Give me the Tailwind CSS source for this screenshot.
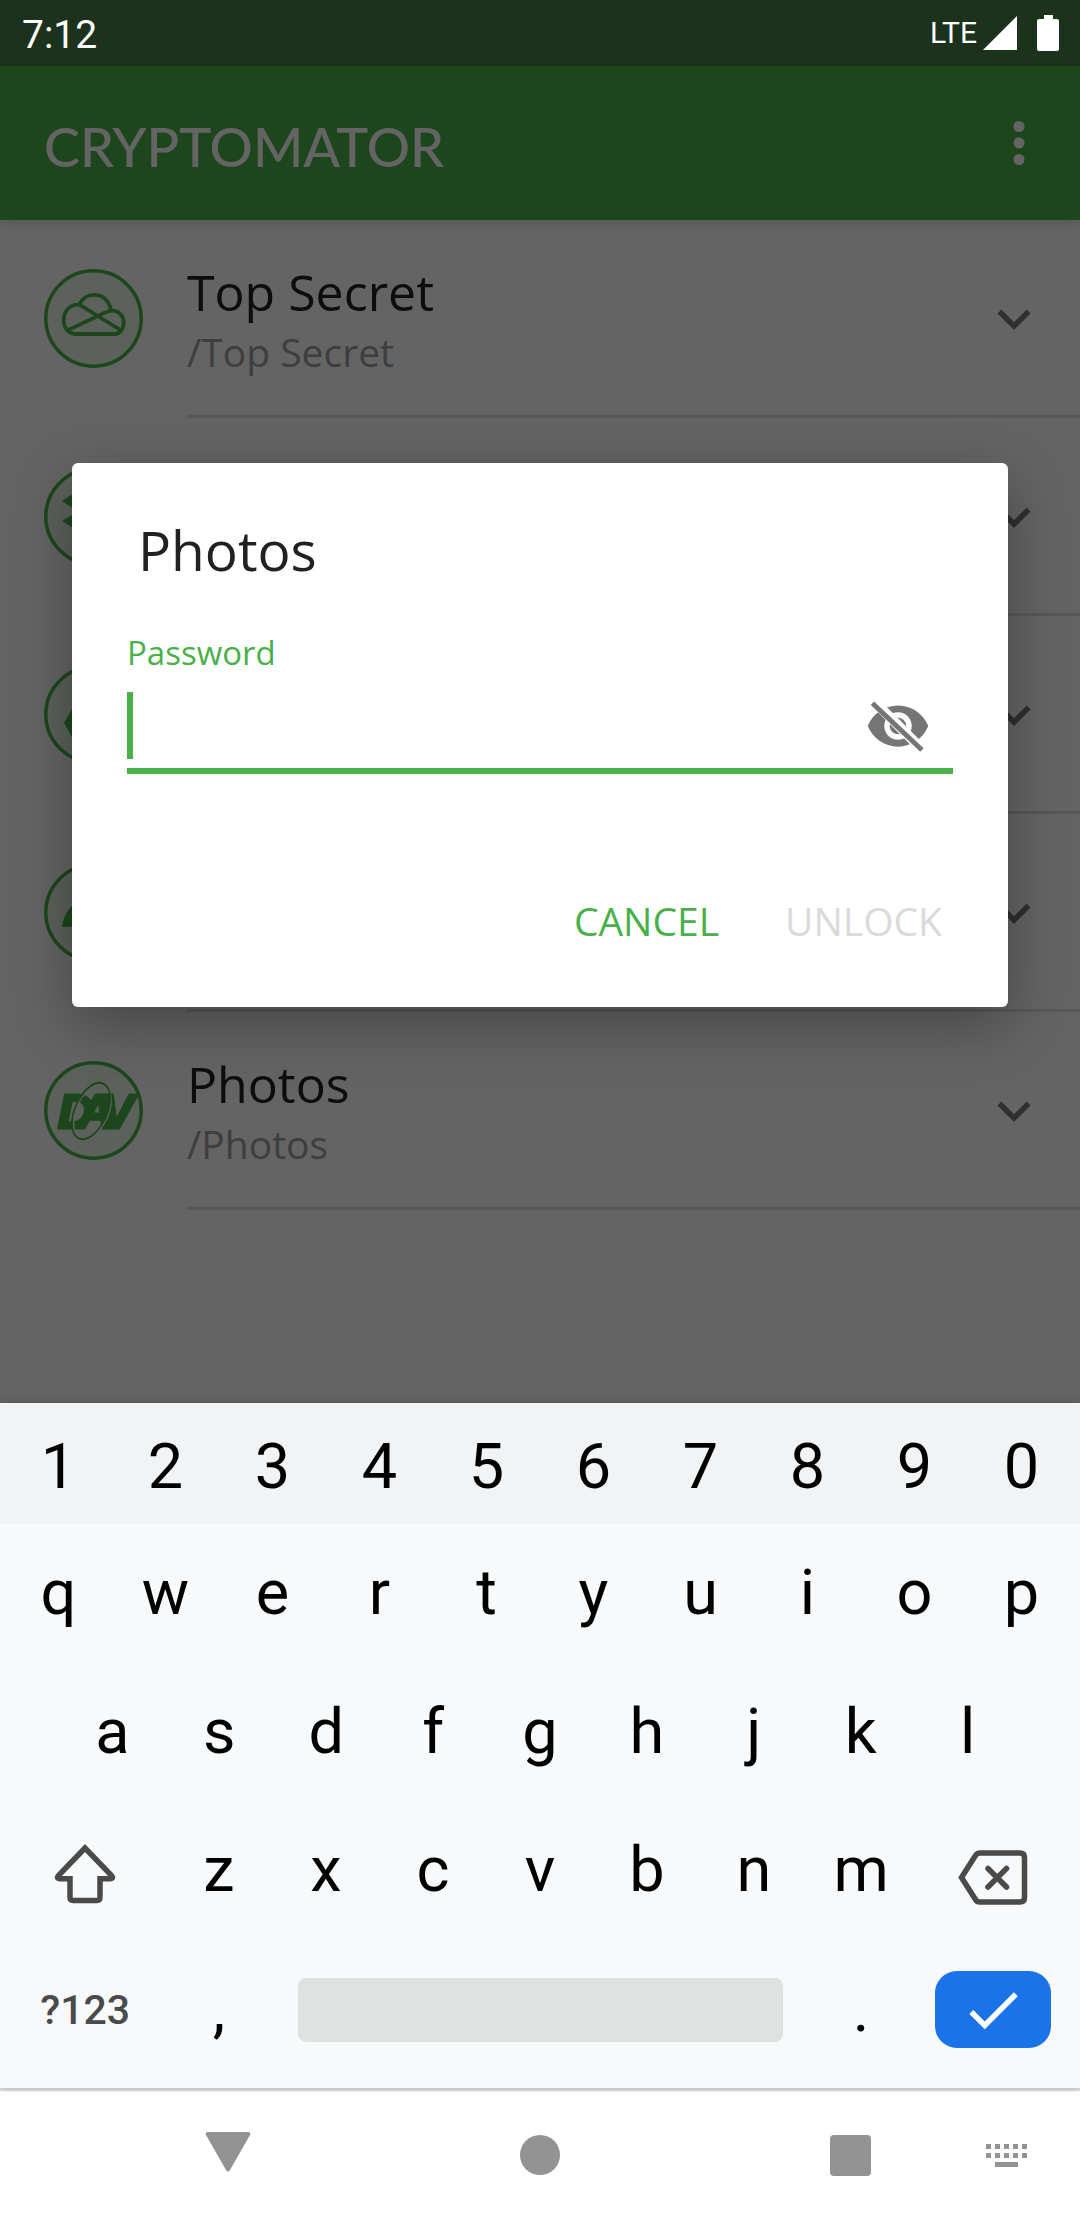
<!DOCTYPE html>
<html lang="en">
<head>
<meta charset="utf-8">
<meta name="viewport" content="width=device-width, initial-scale=1">
<title>Cryptomator</title>
<script src="https://cdn.jsdelivr.net/npm/@tailwindcss/browser@4"></script>
</head>
<body class="flex min-h-screen flex-col bg-white font-['Open_Sans','Noto_Sans',sans-serif]">

<div class="relative flex flex-1 flex-col bg-[#fafafa]">

  <!-- Status bar -->
  <div class="relative z-20 flex h-[66px] items-center bg-[#1c321c] pr-[21px] pl-[22px] font-['Roboto',sans-serif] text-white">
    <span class="flex-1 pt-1 text-[39px] leading-[46px]">7:12</span>
    <span class="font-['Liberation_Sans_Narrow','Roboto',sans-serif] text-[30px] leading-[40px]">LTE</span>
    <svg class="ml-[5px] h-[36px] w-[36px] fill-white" viewBox="0 0 36 36" aria-label="Signal"><path d="M35 1V35H1z"/></svg>
    <svg class="ml-[19px] h-[36px] w-[22px] fill-white" viewBox="0 0 22 36" aria-label="Battery"><path d="M7 0h9v4h4q2 0 2 2v28q0 2-2 2H2q-2 0-2-2V6q0-2 2-2h5z"/></svg>
  </div>

  <!-- App bar -->
  <header class="relative flex h-[154px] items-center bg-[#49b04a] pr-[28px] pl-[44px] text-[#fafafa] shadow-[0_3px_10px_rgba(0,0,0,0.15)]">
    <h1 class="flex-1 pt-2 font-['Lato',sans-serif] text-[54px] leading-[66px] font-medium">CRYPTOMATOR</h1>
    <button type="button" aria-label="More options">
      <svg class="size-[66px] fill-current" viewBox="0 0 24 24"><circle cx="12" cy="6" r="2"/><circle cx="12" cy="12" r="2"/><circle cx="12" cy="18" r="2"/></svg>
    </button>
  </header>

  <!-- Vault list -->
  <ul class="flex flex-col text-[#212121]">
    <li class="flex min-h-[198px] items-stretch gap-[44px] pl-[44px]">
      <svg class="mt-[49px] size-[99px]" viewBox="0 0 99 99" fill="none" stroke="#49b04a">
        <circle cx="49.5" cy="49.5" r="47.7" fill="#e6f3e6" stroke-width="3.5"/>
        <g stroke-width="3.8" stroke-linejoin="round" stroke-linecap="round">
          <path d="M31 65H71C77 65 79.7 58 79.7 53.5C79.7 46 74 41.7 69 41.7C64 41.7 60 44 56 46L25.3 60.5"/>
          <path d="M31 65C23.5 64 19.7 58 19.7 51C19.7 42 26 35.5 35 35.3L75.500 60.500"/>
          <path d="M35.500 35.300C38 29.500 44 25.800 50.500 25.800C58 25.800 65.500 31 67 41.500"/>
        </g>
      </svg>
      <div class="flex flex-1 items-center border-b-3 border-[#dcdcdc] pt-0.5 pr-[33px]">
        <div class="flex-1">
          <h2 class="text-[50px] leading-[67px]">Top Secret</h2>
          <p class="text-[39px] leading-[52px] text-[#9b9b9b]">/Top Secret</p>
        </div>
        <button type="button" aria-label="Vault actions"><svg class="size-[66px] fill-[#757575]" viewBox="0 0 24 24"><path d="M16.59 8.59 12 13.17 7.41 8.59 6 10l6 6 6-6z"/></svg></button>
      </div>
    </li>
    <li class="flex min-h-[198px] items-stretch gap-[44px] pl-[44px]">
      <svg class="mt-[49px] size-[99px]" viewBox="0 0 99 99">
        <circle cx="49.5" cy="49.5" r="47.7" fill="#e6f3e6" stroke="#49b04a" stroke-width="3.5"/>
        <path fill="#49b04a" d="M18 34 34 23.500 50 34 34 44.500zM50 34 66 23.500 82 34 66 44.500zM18 54 34 44.500 50 54 34 64.500zM50 54 66 44.500 82 54 66 64.500zM34 68 50 58 66 68 50 78z"/>
      </svg>
      <div class="flex flex-1 items-center justify-end border-b-3 border-[#dcdcdc] pt-0.5 pr-[33px]">
        <button type="button" aria-label="Vault actions"><svg class="size-[66px] fill-[#757575]" viewBox="0 0 24 24"><path d="M16.59 8.59 12 13.17 7.41 8.59 6 10l6 6 6-6z"/></svg></button>
      </div>
    </li>
    <li class="flex min-h-[198px] items-stretch gap-[44px] pl-[44px]">
      <svg class="mt-[49px] size-[99px]" viewBox="0 0 99 99">
        <circle cx="49.5" cy="49.5" r="47.7" fill="#e6f3e6" stroke="#49b04a" stroke-width="3.5"/>
        <path fill="#49b04a" d="M20 58 39 24 49 41 29.500 75zM42 24H60L79 56H61zM41 59H80L71 75H32z"/>
      </svg>
      <div class="flex flex-1 items-center justify-end border-b-3 border-[#dcdcdc] pt-0.5 pr-[33px]">
        <button type="button" aria-label="Vault actions"><svg class="size-[66px] fill-[#757575]" viewBox="0 0 24 24"><path d="M16.59 8.59 12 13.17 7.41 8.59 6 10l6 6 6-6z"/></svg></button>
      </div>
    </li>
    <li class="flex min-h-[198px] items-stretch gap-[44px] pl-[44px]">
      <svg class="mt-[49px] size-[99px]" viewBox="0 0 99 99">
        <circle cx="49.5" cy="49.5" r="47.7" fill="#e6f3e6" stroke="#49b04a" stroke-width="3.5"/>
        <path fill="#49b04a" d="M18 64C19 55 23 47 29 42C36 34 62 34 70 42C77 48 80 56 81 64z"/>
      </svg>
      <div class="flex flex-1 items-center justify-end border-b-3 border-[#dcdcdc] pt-0.5 pr-[33px]">
        <button type="button" aria-label="Vault actions"><svg class="size-[66px] fill-[#757575]" viewBox="0 0 24 24"><path d="M16.59 8.59 12 13.17 7.41 8.59 6 10l6 6 6-6z"/></svg></button>
      </div>
    </li>
    <li class="flex min-h-[198px] items-stretch gap-[44px] pl-[44px]">
      <svg class="mt-[49px] size-[99px]" viewBox="0 0 99 99">
        <circle cx="49.5" cy="49.5" r="47.7" fill="#e6f3e6" stroke="#49b04a" stroke-width="3.5"/>
        <text x="14 34 57" y="67" fill="#49b04a" stroke="#49b04a" stroke-width="3" font-family="Liberation Sans Narrow, Liberation Sans, sans-serif" font-size="49" font-weight="700" font-style="italic">DAV</text>
        <g fill="none" transform="rotate(24 47 50)">
          <ellipse cx="48.500" cy="50" rx="16" ry="29" stroke="#e6f3e6" stroke-width="1.500"/>
          <ellipse cx="47" cy="50" rx="16" ry="30" stroke="#49b04a" stroke-width="1.800"/>
        </g>
      </svg>
      <div class="flex flex-1 items-center border-b-3 border-[#dcdcdc] pt-0.5 pr-[33px]">
        <div class="flex-1">
          <h2 class="text-[50px] leading-[67px]">Photos</h2>
          <p class="text-[39px] leading-[52px] text-[#9b9b9b]">/Photos</p>
        </div>
        <button type="button" aria-label="Vault actions"><svg class="size-[66px] fill-[#757575]" viewBox="0 0 24 24"><path d="M16.59 8.59 12 13.17 7.41 8.59 6 10l6 6 6-6z"/></svg></button>
      </div>
    </li>
  </ul>

  <!-- Unlock dialog over a dimmed page -->
  <div class="absolute inset-0 z-10 flex items-center bg-black/60 px-[72px] pt-[66px]">
    <form role="dialog" aria-labelledby="dialog-title" class="flex flex-1 flex-col rounded-[6px] bg-white px-[55px] pt-[49px] pb-[38px] shadow-[0_18px_60px_rgba(0,0,0,0.3)]">
      <h2 id="dialog-title" class="pl-[11px] text-[55px] leading-[75px] text-[#212121]">Photos</h2>
      <label for="password" class="mt-[43px] text-[33px] leading-[46px] text-[#49b04a]">Password</label>
      <div class="flex h-[98px] items-center border-b-6 border-[#49b04a] pt-[8px] pr-[22px]">
        <span class="h-[67px] w-[6px] bg-[#49b04a]"></span>
        <input id="password" type="password" class="h-[67px] min-w-0 flex-1 text-[44px] caret-transparent outline-none">
        <button type="button" aria-label="Show password">
          <svg class="size-[66px]" viewBox="0 0 24 24">
            <path fill="#757575" d="M12 4.500C7 4.500 2.730 7.610 1 12c1.730 4.390 6 7.500 11 7.500s9.270-3.110 11-7.500c-1.730-4.390-6-7.500-11-7.500zM12 17c-2.760 0-5-2.240-5-5s2.240-5 5-5 5 2.240 5 5-2.240 5-5 5zM12 9c-1.660 0-3 1.340-3 3s1.340 3 3 3 3-1.340 3-3-1.340-3-3-3z"/>
            <path fill="#fff" d="M2 4.270 19.730 22l2.540-2.540L4.540 1.730z"/>
            <path stroke="#757575" stroke-width="1.800" d="M2.700 3.700 20.700 20.740"/>
          </svg>
        </button>
      </div>
      <div class="mt-[99px] flex justify-end gap-[22px] text-[39px] leading-[52px]">
        <button type="button" class="px-[22px] py-[22px] text-[#49b04a]">CANCEL</button>
        <button type="submit" disabled class="-mr-[11px] px-[22px] py-[22px] text-[#dadada]">UNLOCK</button>
      </div>
    </form>
  </div>
</div>

<!-- Keyboard -->
<section aria-label="Keyboard" class="relative z-20 bg-[#f8f9fb] font-['Roboto',sans-serif] text-[63px] leading-[74px] text-black shadow-[0_0_8px_rgba(0,0,0,0.2)]">
  <div class="grid h-[121px] grid-cols-10 bg-[#f1f3f4] px-[5px] pt-1.5">
    <button type="button">1</button><button type="button">2</button><button type="button">3</button><button type="button">4</button><button type="button">5</button><button type="button">6</button><button type="button">7</button><button type="button">8</button><button type="button">9</button><button type="button">0</button>
  </div>
  <div class="grid h-[138px] grid-cols-10 px-[5px]">
    <button type="button">q</button><button type="button">w</button><button type="button">e</button><button type="button">r</button><button type="button">t</button><button type="button">y</button><button type="button">u</button><button type="button">i</button><button type="button">o</button><button type="button">p</button>
  </div>
  <div class="grid h-[139px] grid-cols-9 px-[59px]">
    <button type="button">a</button><button type="button">s</button><button type="button">d</button><button type="button">f</button><button type="button">g</button><button type="button">h</button><button type="button">j</button><button type="button">k</button><button type="button">l</button>
  </div>
  <div class="grid h-[138px] grid-cols-[3fr_repeat(7,2fr)_3fr] px-[5px]">
    <button type="button" aria-label="Shift" class="flex items-center justify-center">
      <svg class="h-[72px] w-[66px]" viewBox="0 0 66 72" fill="none" stroke="#4a4a4a" stroke-width="5.500"><path d="M33 14 6.500 41.500Q4 44.800 8 44.800H18V63Q18 66.500 21 66.500H45Q48 66.500 48 63V44.800H58Q62 44.800 59.500 41.500z"/></svg>
    </button>
    <button type="button">z</button><button type="button">x</button><button type="button">c</button><button type="button">v</button><button type="button">b</button><button type="button">n</button><button type="button">m</button>
    <button type="button" aria-label="Backspace" class="flex items-center justify-center">
      <svg class="h-[72px] w-[80px]" viewBox="0 0 80 72" fill="none" stroke="#4a4a4a" stroke-width="5.500"><path d="M6.500 43.500 20.500 21.500Q22 19 25 19H65Q69.500 19 69.500 23.500V63.500Q69.500 68 65 68H25Q22 68 20.500 65.500z"/><path stroke-linecap="round" d="M33 34.500 51.500 53M51.500 34.500 33 53"/></svg>
    </button>
  </div>
  <div class="grid h-[149px] grid-cols-[3fr_2fr_10fr_2fr_3fr] px-[5px] pb-[8px]">
    <button type="button" class="text-[41px] font-medium text-[#4a4a4a]">?123</button>
    <button type="button">,</button>
    <button type="button" aria-label="Space" class="mx-[25px] h-[64px] self-center rounded-[8px] bg-[#e0e2e1]"></button>
    <button type="button">.</button>
    <button type="button" aria-label="Done" class="mr-[24px] ml-[20px] flex h-[77px] items-center justify-center self-center rounded-[22px] bg-[#1a73e8]">
      <svg class="size-[66px] fill-white" viewBox="0 0 24 24"><path d="M9 16.170 4.830 12l-1.420 1.410L9 19 21 7l-1.410-1.410z"/></svg>
    </button>
  </div>
</section>

<!-- Navigation bar -->
<nav aria-label="System" class="grid h-[132px] grid-cols-[456fr_168fr_156fr_142fr_12fr_146fr] place-items-center border-t-3 border-[#dedede] bg-white">
  <button type="button" aria-label="Back" class="col-start-1"><svg class="size-[48px] fill-[#939393]" viewBox="0 0 48 48"><path d="M4 0H44Q47 0 46 3L26 38Q24 41 22 38L2 3Q1 0 4 0z"/></svg></button>
  <button type="button" aria-label="Home" class="col-start-2"><svg class="size-[48px] fill-[#939393]" viewBox="0 0 48 48"><circle cx="24" cy="23" r="20"/></svg></button>
  <button type="button" aria-label="Recent apps" class="col-start-4"><svg class="size-[48px] fill-[#939393]" viewBox="0 0 48 48"><rect x="3" y="3" width="41" height="41" rx="4"/></svg></button>
  <button type="button" aria-label="Switch keyboard" class="col-start-6"><svg class="size-[48px] fill-[#939393]" viewBox="0 0 48 48"><path d="M3 12h5v5H3zM12 12h5v5h-5zM21 12h5v5h-5zM30 12h5v5h-5zM39 12h5v5h-5zM3 21h5v5H3zM12 21h5v5h-5zM21 21h5v5h-5zM30 21h5v5h-5zM39 21h5v5h-5zM12 30h23v5H12z"/></svg></button>
</nav>

</body>
</html>
